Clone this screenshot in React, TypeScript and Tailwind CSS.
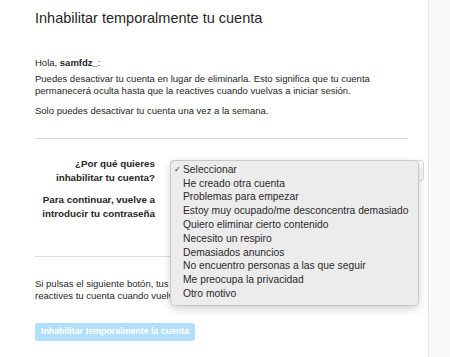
import React from "react";

const items = [
  "Seleccionar",
  "He creado otra cuenta",
  "Problemas para empezar",
  "Estoy muy ocupado/me desconcentra demasiado",
  "Quiero eliminar cierto contenido",
  "Necesito un respiro",
  "Demasiados anuncios",
  "No encuentro personas a las que seguir",
  "Me preocupa la privacidad",
  "Otro motivo",
];

export default function App() {
  return (
    <div
      className="flex w-[450px] h-[357px] overflow-hidden bg-white text-[#262626]"
      style={{ fontFamily: '"Liberation Sans", Arial, sans-serif' }}
    >
      <div className="w-[428px] shrink-0 pl-[35px] pr-[21px] pt-[8px]">
        <h1 className="text-[14.5px] leading-[20px] font-normal whitespace-nowrap">Inhabilitar temporalmente tu cuenta</h1>
        <p className="mt-[29px] text-[9.5px] leading-[12px]">
          Hola, <span className="font-bold">samfdz_</span>:
        </p>
        <p className="mt-[4px] text-[9.5px] leading-[12px] whitespace-nowrap">
          Puedes desactivar tu cuenta en lugar de eliminarla. Esto significa que tu cuenta
          <br />
          permanecerá oculta hasta que la reactives cuando vuelvas a iniciar sesión.
        </p>
        <p className="mt-[8px] text-[9.5px] leading-[12px]">Solo puedes desactivar tu cuenta una vez a la semana.</p>
        <div className="mt-[21px] h-px bg-[#dbdbdb]" />
        <div className="relative mt-[21px] flex gap-[15px]">
          <div className="w-[120px] shrink-0 flex flex-col gap-[9px] text-right text-[9.8px] leading-[13.5px] font-bold whitespace-nowrap">
            <div className="mt-[-3px]">
              ¿Por qué quieres
              <br />
              inhabilitar tu cuenta?
            </div>
            <div>
              Para continuar, vuelve a
              <br />
              introducir tu contraseña
            </div>
          </div>
          <div className="relative flex-1">
            <div className="h-[21px] mr-[-17px] rounded-[3px] border border-[#dbdbdb] bg-[#fafafa]" />
            <div className="absolute left-0 top-0 z-10 w-[249px] rounded-[5px] border border-[#c9c9c9] bg-[#ececec] pt-[2px] pb-[4px] shadow-[0_3px_8px_rgba(0,0,0,0.18)]">
              {items.map((t, i) => (
                <div key={t} className="flex h-[13.8px] items-center whitespace-nowrap text-[10.3px] text-[#2a2a2a]">
                  <span className="w-[12px] shrink-0 pl-[3px] text-[8px] leading-none">{i === 0 ? "✓" : ""}</span>
                  <span className="leading-none">{t}</span>
                </div>
              ))}
            </div>
          </div>
        </div>
        <div className="mt-[36px] h-px bg-[#dbdbdb]" />
        <p className="mt-[21px] text-[9.5px] leading-[12px] whitespace-nowrap">
          Si pulsas el siguiente botón, tus fotos, comentarios y Me gusta se ocultarán hasta que
          <br />
          reactives tu cuenta cuando vuelvas a iniciar sesión.
        </p>
        <button className="mt-[21px] h-[18px] rounded-[3px] bg-[#b2dffc] px-[6px] text-[8.8px] font-bold text-white whitespace-nowrap">
          Inhabilitar temporalmente la cuenta
        </button>
      </div>
      <div className="flex-1 border-l border-[#e6e6e6] bg-[#fafafa]" />
    </div>
  );
}
